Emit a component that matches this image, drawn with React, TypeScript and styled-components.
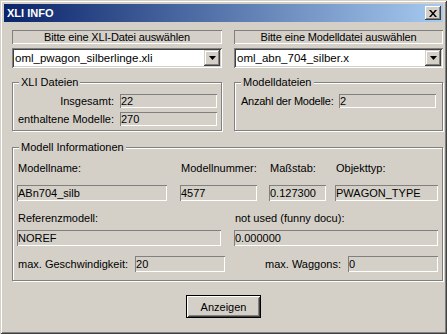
import React from 'react'
import styled, { createGlobalStyle } from 'styled-components'

const GlobalStyle = createGlobalStyle`
  html, body {
    margin: 0;
    padding: 0;
    background: #d4d0c8;
  }
  body {
    font-family: "Liberation Sans", Arial, sans-serif;
    font-size: 11px;
    color: #000000;
  }
`

const Window = styled.div`
  box-sizing: border-box;
  width: 447px;
  height: 334px;
  padding: 4px;
  background: #d4d0c8;
  box-shadow: inset 1px 1px #d4d0c8, inset -1px -1px #404040,
    inset 2px 2px #ffffff, inset -2px -2px #808080;
  display: flex;
  flex-direction: column;
`

const TitleBar = styled.div`
  height: 18px;
  display: flex;
  align-items: center;
  justify-content: space-between;
  padding: 0 2px 0 3px;
  background: linear-gradient(to right, #0a246a, #a6caf0);
`

const Title = styled.span`
  color: #ffffff;
  font-weight: bold;
  font-size: 11px;
  line-height: 18px;
`

const CaptionButton = styled.span`
  width: 16px;
  height: 14px;
  display: flex;
  align-items: center;
  justify-content: center;
  background: #d4d0c8;
  box-shadow: inset -1px -1px #404040, inset 1px 1px #ffffff,
    inset -2px -2px #808080, inset 2px 2px #d4d0c8;
`

const Body = styled.div`
  flex: 1;
  display: flex;
  flex-direction: column;
  padding: 8px 0 0 8px;
`

const Columns = styled.div<{ $top?: number }>`
  display: grid;
  grid-template-columns: 210px 209px;
  column-gap: 12px;
  margin-top: ${(p) => p.$top ?? 0}px;
`

const Stack = styled.div`
  display: flex;
  flex-direction: column;
  gap: 4px;
`

const Heading = styled.div`
  height: 14px;
  line-height: 14px;
  text-align: center;
  letter-spacing: -0.15px;
  box-shadow: inset 1px 1px #808080, inset -1px -1px #ffffff;
`

const Combo = styled.div`
  box-sizing: border-box;
  height: 20px;
  padding: 2px;
  display: flex;
  background: #ffffff;
  box-shadow: inset 1px 1px #808080, inset -1px -1px #ffffff,
    inset 2px 2px #404040, inset -2px -2px #d4d0c8;
`

const ComboText = styled.span`
  flex: 1;
  padding-left: 1px;
  font-size: 11.5px;
  line-height: 16px;
  white-space: nowrap;
  overflow: hidden;
`

const ComboButton = styled.span`
  width: 16px;
  height: 16px;
  display: flex;
  align-items: center;
  justify-content: center;
  background: #d4d0c8;
  box-shadow: inset -1px -1px #404040, inset 1px 1px #d4d0c8,
    inset -2px -2px #808080, inset 2px 2px #ffffff;
`

const Group = styled.div<{ $h: number; $pt: number; $pl: number }>`
  position: relative;
  box-sizing: border-box;
  height: ${(p) => p.$h}px;
  padding: ${(p) => p.$pt}px 4px 0 ${(p) => p.$pl}px;
  border: 1px solid #808080;
  box-shadow: inset 1px 1px #ffffff, 1px 1px #ffffff;
`

const Legend = styled.span`
  position: absolute;
  top: -7px;
  left: 6px;
  padding: 0 2px;
  line-height: 13px;
  background: #d4d0c8;
`

const PairGrid = styled.div<{ $cols: string; $gap: number }>`
  display: grid;
  grid-template-columns: ${(p) => p.$cols};
  column-gap: ${(p) => p.$gap}px;
  row-gap: 4px;
  align-items: center;
`

const Label = styled.span<{ $right?: boolean; $tight?: boolean }>`
  line-height: 13px;
  white-space: nowrap;
  text-align: ${(p) => (p.$right ? 'right' : 'left')};
  letter-spacing: ${(p) => (p.$tight ? '-0.25px' : 'normal')};
`

const Field = styled.div<{ $w?: number; $h?: number }>`
  box-sizing: border-box;
  flex: none;
  width: ${(p) => (p.$w ? `${p.$w}px` : 'auto')};
  height: ${(p) => p.$h ?? 14}px;
  line-height: ${(p) => p.$h ?? 14}px;
  padding-left: 1px;
  white-space: nowrap;
  overflow: hidden;
  box-shadow: inset 1px 1px #808080, inset -1px -1px #ffffff;
`

const InfoGrid = styled.div<{ $cols: string; $top: number }>`
  display: grid;
  grid-template-columns: ${(p) => p.$cols};
  grid-template-rows: 13px 16px;
  row-gap: ${(p) => p.$top}px;
`

const Cell = styled.span`
  padding-left: 1px;
  line-height: 13px;
  white-space: nowrap;
`

const BottomRow = styled.div`
  display: grid;
  grid-template-columns: 205px 12px 204px;
  margin-top: 10px;
`

const Inline = styled.div<{ $end?: boolean }>`
  display: flex;
  align-items: center;
  justify-content: ${(p) => (p.$end ? 'flex-end' : 'space-between')};
  gap: 7px;
  padding-left: 1px;
  white-space: nowrap;
`

const ButtonRow = styled.div`
  display: flex;
  justify-content: center;
  padding-right: 8px;
  margin-top: 14px;
`

const PushButton = styled.button`
  box-sizing: border-box;
  width: 75px;
  height: 23px;
  padding: 0;
  font-family: inherit;
  font-size: 11px;
  color: #000000;
  background: #d4d0c8;
  border: 1px solid #000000;
  box-shadow: inset 1px 1px #ffffff, inset -1px -1px #404040,
    inset 2px 2px #d4d0c8, inset -2px -2px #808080;
`

const CloseGlyph = () => (
  <svg width="8" height="7" viewBox="0 0 8 7">
    <path d="M0 0h2l2 2.5L6 0h2L5 3.5 8 7H6L4 4.5 2 7H0l3-3.5z" fill="#000" />
  </svg>
)

const Arrow = () => (
  <svg width="7" height="4" viewBox="0 0 7 4">
    <path d="M0 0h7L3.5 4z" fill="#000" />
  </svg>
)

const App: React.FC = () => {
  return (
    <Window>
      <GlobalStyle />
      <TitleBar>
        <Title>XLI INFO</Title>
        <CaptionButton>
          <CloseGlyph />
        </CaptionButton>
      </TitleBar>

      <Body>
        <Columns>
          <Stack>
            <Heading>Bitte eine XLI-Datei auswählen</Heading>
            <Combo>
              <ComboText>oml_pwagon_silberlinge.xli</ComboText>
              <ComboButton>
                <Arrow />
              </ComboButton>
            </Combo>
          </Stack>
          <Stack>
            <Heading>Bitte eine Modelldatei auswählen</Heading>
            <Combo>
              <ComboText>oml_abn_704_silber.x</ComboText>
              <ComboButton>
                <Arrow />
              </ComboButton>
            </Combo>
          </Stack>
        </Columns>

        <Columns $top={14}>
          <Group $h={49} $pt={11} $pl={5}>
            <Legend>XLI Dateien</Legend>
            <PairGrid $cols="96px 97px" $gap={6}>
              <Label $right>Insgesamt:</Label>
              <Field>22</Field>
              <Label $right>enthaltene Modelle:</Label>
              <Field>270</Field>
            </PairGrid>
          </Group>
          <Group $h={49} $pt={11} $pl={6}>
            <Legend>Modelldateien</Legend>
            <PairGrid $cols="93px 97px" $gap={5}>
              <Label $tight>Anzahl der Modelle:</Label>
              <Field>2</Field>
            </PairGrid>
          </Group>
        </Columns>

        <Group $h={134} $pt={14} $pl={4} style={{ marginTop: 16 }}>
          <Legend>Modell Informationen</Legend>
          <InfoGrid $cols="163px 89px 66px 103px" $top={10}>
            <Cell>Modellname:</Cell>
            <Cell>Modellnummer:</Cell>
            <Cell>Maßstab:</Cell>
            <Cell>Objekttyp:</Cell>
            <Field $w={150} $h={16}>ABn704_silb</Field>
            <Field $w={77} $h={16}>4577</Field>
            <Field $w={57} $h={16}>0.127300</Field>
            <Field $w={103} $h={16}>PWAGON_TYPE</Field>
          </InfoGrid>
          <InfoGrid $cols="217px 204px" $top={5} style={{ marginTop: 11 }}>
            <Cell>Referenzmodell:</Cell>
            <Cell>not used (funny docu):</Cell>
            <Field $w={204} $h={16}>NOREF</Field>
            <Field $w={204} $h={16}>0.000000</Field>
          </InfoGrid>
          <BottomRow>
            <Inline>
              <span>max. Geschwindigkeit:</span>
              <Field $w={90} $h={16}>20</Field>
            </Inline>
            <span />
            <Inline $end>
              <span>max. Waggons:</span>
              <Field $w={90} $h={16}>0</Field>
            </Inline>
          </BottomRow>
        </Group>

        <ButtonRow>
          <PushButton>Anzeigen</PushButton>
        </ButtonRow>
      </Body>
    </Window>
  )
}

export default App
